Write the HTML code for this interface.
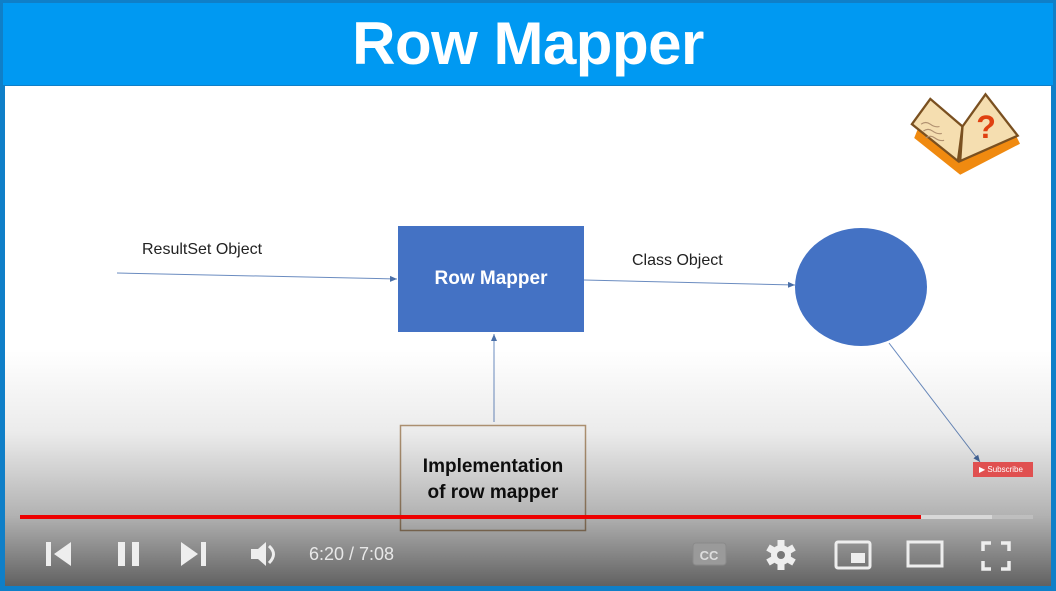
<!DOCTYPE html>
<html><head><meta charset="utf-8"><style>
html,body{margin:0;padding:0}
body{width:1056px;height:591px;position:relative;overflow:hidden;background:#fff;font-family:"Liberation Sans",sans-serif}
.abs{position:absolute}
</style></head><body>
<div class="abs" style="left:0;top:0;width:1056px;height:591px;background:#0f7fc8"></div>
<div class="abs" style="left:3px;top:3px;width:1050px;height:82px;background:#0099f2"></div>
<div class="abs" style="left:0;top:3px;width:1056px;text-align:center;color:#fff;font-weight:bold;font-size:60px;line-height:82px;letter-spacing:-0.5px">Row Mapper</div>
<div class="abs" style="left:5px;top:86px;width:1046px;height:500px;background:#fff"></div>
<svg class="abs" style="left:0;top:0" width="1056" height="591">
<defs><marker id="a" markerWidth="8" markerHeight="8" refX="7" refY="4" orient="auto"><path d="M0,1 L7,4 L0,7z" fill="#4a6fa8"/></marker></defs>
<line x1="117" y1="273" x2="397" y2="279" stroke="#6b8cc0" stroke-width="1" marker-end="url(#a)"/>
<line x1="584" y1="280" x2="795" y2="285" stroke="#6b8cc0" stroke-width="1" marker-end="url(#a)"/>
<line x1="494" y1="422" x2="494" y2="334" stroke="#6b8cc0" stroke-width="1" marker-end="url(#a)"/>
<line x1="889" y1="343" x2="980" y2="462" stroke="#6b8cc0" stroke-width="1" marker-end="url(#a)"/>
<rect x="398" y="226" width="186" height="106" fill="#4472c4"/>
<ellipse cx="861" cy="287" rx="66" ry="59" fill="#4472c4"/>
<rect x="400.5" y="425.5" width="185" height="105" fill="none" stroke="#b89a78" stroke-width="1.5"/>
<g transform="translate(905,92) scale(1.15)">
<path d="M8,40 L48,72 L100,45 L95,35 L50,60 L12,30z" fill="#f08a10"/>
<path d="M6,28 L22,6 L50,30 L46,60z" fill="#f5deb0" stroke="#7a5020" stroke-width="2"/>
<path d="M50,30 L70,2 L98,38 L48,60z" fill="#f5deb0" stroke="#7a5020" stroke-width="2"/>
<path d="M14,28 q4,-3 8,0 t8,2 M16,34 q4,-3 8,0 t8,2 M18,40 q4,-3 8,0 t8,2" stroke="#b09070" fill="none"/>
<text x="62" y="40" fill="#e04010" font-size="28" font-weight="bold">?</text>
</g>
</svg>
<div class="abs" style="left:142px;top:241px;font-size:16px;color:#222">ResultSet Object</div>
<div class="abs" style="left:632px;top:252px;font-size:16px;color:#222">Class Object</div>
<div class="abs" style="left:398px;top:268px;width:186px;text-align:center;font-size:19px;font-weight:bold;color:#fff">Row Mapper</div>
<div class="abs" style="left:400px;top:454px;width:186px;text-align:center;font-size:19px;font-weight:bold;color:#111;line-height:26px">Implementation<br>of row mapper</div>
<div class="abs" style="left:5px;top:350px;width:1046px;height:236px;background:linear-gradient(to bottom,rgba(0,0,0,0),rgba(0,0,0,0.08) 35%,rgba(0,0,0,0.3) 70%,rgba(0,0,0,0.62))"></div>
<div class="abs" style="left:973px;top:462px;width:60px;height:15px;background:#e05050;color:#fff;font-size:8px;line-height:15px;padding-left:6px;box-sizing:border-box">▶ Subscribe</div>
<div class="abs" style="left:20px;top:515px;width:1013px;height:4px;background:rgba(200,200,200,0.6)"></div>
<div class="abs" style="left:20px;top:515px;width:972px;height:4px;background:#d8d8d8"></div>
<div class="abs" style="left:20px;top:515px;width:901px;height:4px;background:#ee0000"></div>
<svg class="abs" style="left:0;top:530px" width="1056" height="56" fill="#eee">
<rect x="46" y="12" width="5" height="24"/><path d="M71,12 L71,36 L54,24z"/>
<rect x="118" y="12" width="7" height="24"/><rect x="132" y="12" width="7" height="24"/>
<path d="M181,12 L181,36 L198,24z"/><rect x="201" y="12" width="5" height="24"/>
<path d="M251,19 L258,19 L266,12 L266,36 L258,29 L251,29z"/><path d="M269,16 Q278,24 269,33" stroke="#eee" stroke-width="3" fill="none"/>
<rect x="693" y="13" width="33" height="22" rx="3" fill="#9a9a9a" stroke="#8a8a8a"/>
<text x="709" y="30" fill="#ddd" font-size="13" font-weight="bold" text-anchor="middle" font-family="Liberation Sans">CC</text>
<g transform="translate(781,25)"><circle r="10"/><g><rect x="-3.5" y="-15" width="7" height="30"/><rect x="-3.5" y="-15" width="7" height="30" transform="rotate(60)"/><rect x="-3.5" y="-15" width="7" height="30" transform="rotate(-60)"/></g><circle r="4" fill="#777"/></g>
<rect x="836" y="12" width="34" height="26" rx="2" fill="none" stroke="#eee" stroke-width="3"/><rect x="851" y="23" width="14" height="10"/>
<rect x="908" y="12" width="34" height="24" fill="none" stroke="#eee" stroke-width="3"/>
<path d="M983,21 L983,13 L991,13 M1001,13 L1009,13 L1009,21 M1009,31 L1009,39 L1001,39 M991,39 L983,39 L983,31" stroke="#eee" stroke-width="3.5" fill="none"/>
</svg>
<div class="abs" style="left:309px;top:544px;color:#e8e8e8;font-size:18px">6:20 / 7:08</div>
</body></html>
